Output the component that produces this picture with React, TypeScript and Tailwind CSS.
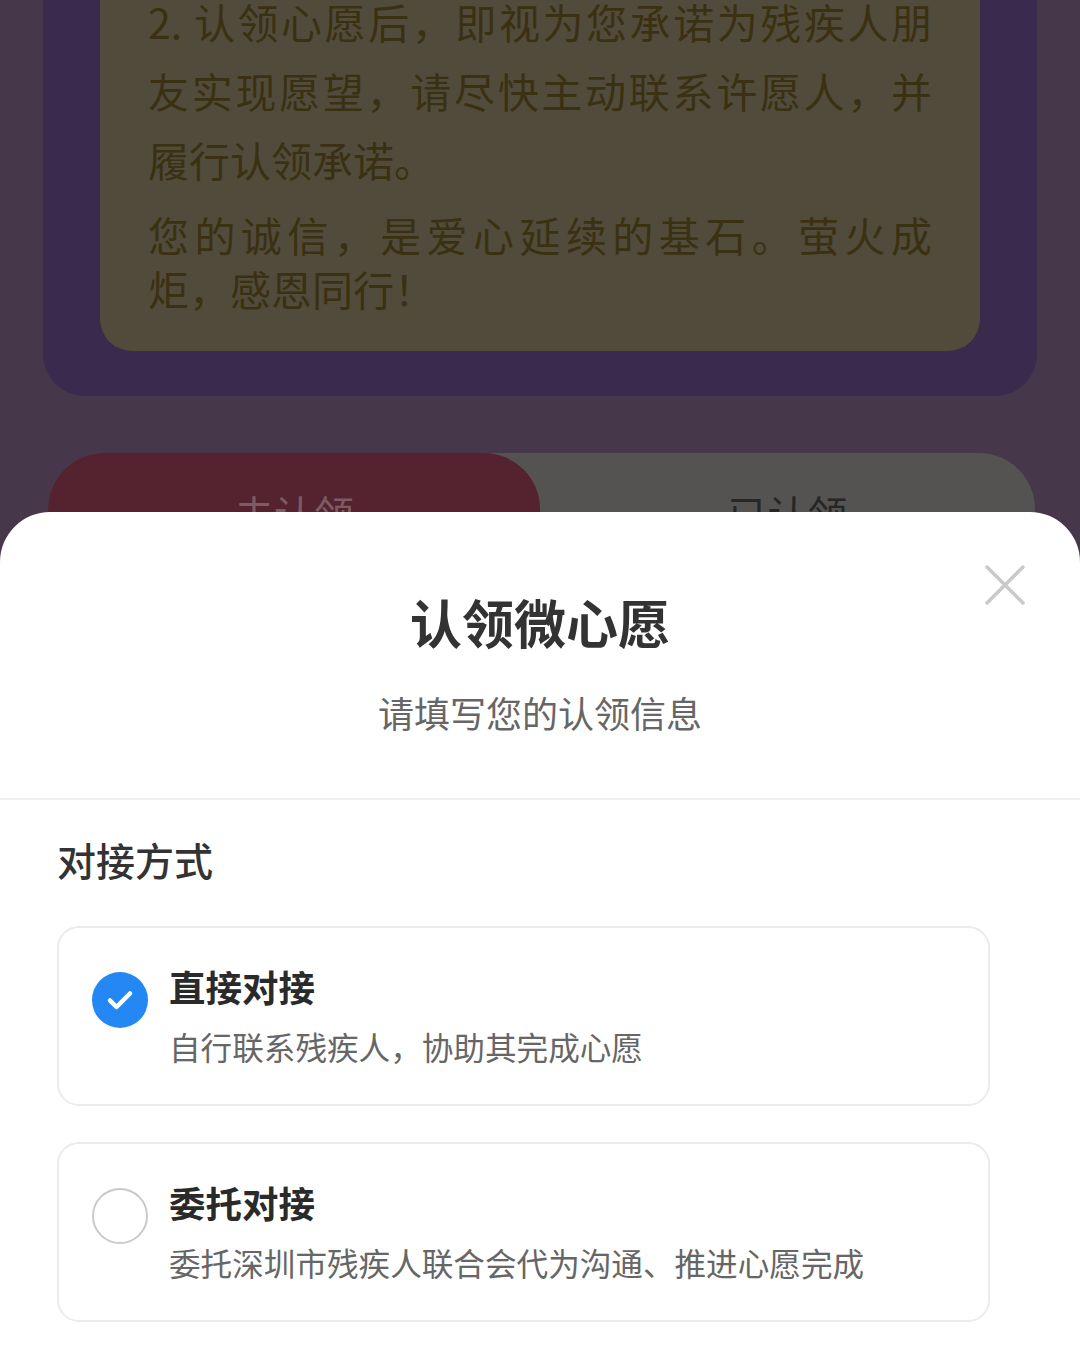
const cjk = { fontFamily: '"Noto Sans CJK SC", "Noto Sans", sans-serif' };

function Radio({ checked }: { checked: boolean }) {
  if (checked) {
    return (
      <div className="mt-[8px] flex h-[56px] w-[56px] shrink-0 items-center justify-center rounded-full bg-[#2388f3]">
        <svg width="30" height="30" viewBox="0 0 30 30" fill="none">
          <path d="M5 15.5l6.5 6.5L25 8.5" stroke="#fff" strokeWidth="4.5" strokeLinecap="round" strokeLinejoin="round" />
        </svg>
      </div>
    );
  }
  return <div className="mt-[8px] h-[56px] w-[56px] shrink-0 rounded-full border-[2.5px] border-[#cacaca]" />;
}

function Option({ checked, title, desc }: { checked: boolean; title: string; desc: string }) {
  return (
    <div className="flex h-[180px] gap-[21px] rounded-[22px] border-2 border-[#ebebeb] pl-[33px] pt-[36px]">
      <Radio checked={checked} />
      <div className="flex flex-col gap-[16px]">
        <div className="text-[36.5px] font-bold leading-[46px] text-[#2a2a2a]">{title}</div>
        <div className="text-[31.6px] leading-[40px] text-[#666]">{desc}</div>
      </div>
    </div>
  );
}

export default function App() {
  const line = "block text-justify [text-align-last:justify]";
  return (
    <div className="relative h-[1348px] w-[1080px] overflow-hidden bg-[#46384a]" style={cjk}>
      {/* dimmed page behind the sheet */}
      <div className="px-[43px]">
        <div className="rounded-b-[42px] bg-[#3a2b4e] px-[57px] pb-[45px]">
          <div className="rounded-b-[32px] bg-[#514b3c] px-[48px] pb-[36px] text-[41px] text-[#3a3112]">
            <div className="-mt-[13px] leading-[69px]">
              <span className={line}>2. 认领心愿后，即视为您承诺为残疾人朋</span>
              <span className={line}>友实现愿望，请尽快主动联系许愿人，并</span>
              <span className="block">履行认领承诺。</span>
            </div>
            <div className="mt-[13px] leading-[54px]">
              <span className={line}>您的诚信，是爱心延续的基石。萤火成</span>
              <span className="block">炬，感恩同行！</span>
            </div>
          </div>
        </div>

        <div className="mx-[5px] mr-[2px] mt-[57px] flex h-[120px] rounded-t-[56px] bg-[#545352]">
          <div className="flex w-[492px] items-center justify-center rounded-t-[56px] bg-[#55232f] text-[40px] text-[#7d5b62]">
            未认领
          </div>
          <div className="flex flex-1 items-center justify-center text-[40px] text-[#262626]">已认领</div>
        </div>
      </div>

      {/* bottom sheet */}
      <div className="absolute inset-x-0 top-[512px] bottom-0 rounded-t-[50px] bg-white">
        <button className="absolute right-[55px] top-[53px] h-[40px] w-[40px]">
          <svg width="40" height="40" viewBox="0 0 40 40">
            <path d="M2 2L38 38M38 2L2 38" stroke="#c9c9c9" strokeWidth="3.5" strokeLinecap="round" />
          </svg>
        </button>

        <div className="flex flex-col items-center border-b-2 border-[#efefef] pb-[64px] pt-[80px]">
          <div className="text-[52px] font-bold leading-[60px] text-[#333]">认领微心愿</div>
          <div className="mt-[38px] text-[36px] leading-[44px] text-[#666]">请填写您的认领信息</div>
        </div>

        <div className="pl-[57px] pr-[90px] pt-[36px]">
          <div className="text-[39px] font-medium leading-[46px] text-[#333]">对接方式</div>
          <div className="mt-[44px] flex flex-col gap-[36px]">
            <Option checked title="直接对接" desc="自行联系残疾人，协助其完成心愿" />
            <Option checked={false} title="委托对接" desc="委托深圳市残疾人联合会代为沟通、推进心愿完成" />
          </div>
        </div>
      </div>
    </div>
  );
}
